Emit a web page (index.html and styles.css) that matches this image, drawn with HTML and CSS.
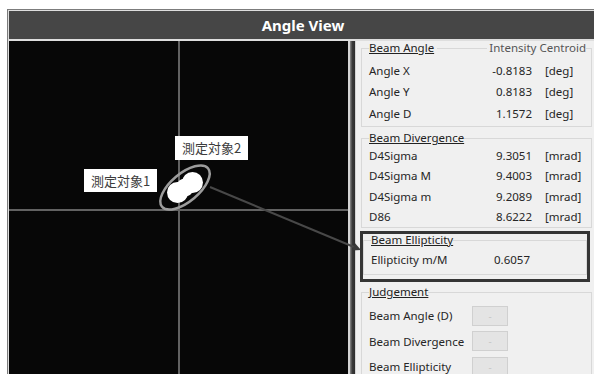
FILE: index.html
```html
<!DOCTYPE html>
<html lang="ja">
<head>
<meta charset="utf-8">
<title>Angle View</title>
<link rel="stylesheet" href="styles.css">
</head>
<body>
<div class="frame">
  <div class="title">Angle View</div>
  <div class="main">
    <div class="canvas">
      <svg class="plot" width="339" height="340" viewBox="0 0 339 340">
        <line class="axis" x1="170" y1="0" x2="170" y2="340"/>
        <line class="axis" x1="0" y1="169" x2="339" y2="169"/>
        <ellipse class="ring" cx="0" cy="0" rx="30" ry="14" transform="translate(176 146.5) rotate(-40)"/>
        <circle class="spot" cx="168.5" cy="151.5" r="10.5"/>
        <circle class="spot" cx="183.5" cy="141.5" r="10.5"/>
        <ellipse class="spot" cx="0" cy="0" rx="9" ry="9" transform="translate(176 146.5) rotate(-36)"/>
      </svg>
      <div class="tag tag-1">測定対象1</div>
      <div class="tag tag-2">測定対象2</div>
    </div>
    <div class="splitter"></div>
    <div class="panel">
      <fieldset class="group group-angle">
        <legend class="legend legend-split"><span class="legend-title">Beam Angle</span><span class="legend-rule"></span><span class="legend-note">Intensity Centroid</span></legend>
        <div class="row"><span class="label">Angle X</span><span class="value">-0.8183</span><span class="unit">[deg]</span></div>
        <div class="row"><span class="label">Angle Y</span><span class="value">0.8183</span><span class="unit">[deg]</span></div>
        <div class="row"><span class="label">Angle D</span><span class="value">1.1572</span><span class="unit">[deg]</span></div>
      </fieldset>
      <fieldset class="group group-div">
        <legend class="legend"><span class="legend-title">Beam Divergence</span></legend>
        <div class="row row-div"><span class="label">D4Sigma</span><span class="value">9.3051</span><span class="unit">[mrad]</span></div>
        <div class="row row-div"><span class="label">D4Sigma M</span><span class="value">9.4003</span><span class="unit">[mrad]</span></div>
        <div class="row row-div"><span class="label">D4Sigma m</span><span class="value">9.2089</span><span class="unit">[mrad]</span></div>
        <div class="row row-div"><span class="label">D86</span><span class="value">8.6222</span><span class="unit">[mrad]</span></div>
      </fieldset>
      <div class="highlight">
        <fieldset class="group group-ell">
          <legend class="legend legend-tight"><span class="legend-title">Beam Ellipticity</span></legend>
          <div class="row row-ell"><span class="label label-ell">Ellipticity m/M</span><span class="value">0.6057</span></div>
        </fieldset>
      </div>
      <fieldset class="group group-judge">
        <legend class="legend"><span class="legend-title">Judgement</span></legend>
        <div class="row row-judge"><span class="label label-judge">Beam Angle (D)</span><span class="judge-box">-</span></div>
        <div class="row row-judge"><span class="label label-judge">Beam Divergence</span><span class="judge-box">-</span></div>
        <div class="row row-judge"><span class="label label-judge">Beam Ellipticity</span><span class="judge-box">-</span></div>
      </fieldset>
    </div>
    <svg class="arrow" width="588" height="340" viewBox="0 0 588 340">
      <line x1="201" y1="146" x2="345" y2="206"/>
      <polygon points="352,209 343.1,209.6 346.1,202.2"/>
    </svg>
  </div>
</div>
</body>
</html>
```
FILE: styles.css
```css
html, body {
  margin: 0;
  padding: 0;
}
body {
  background: #ffffff;
  overflow: hidden;
  width: 594px;
  height: 374px;
  font-family: "Noto Sans", "Liberation Sans", sans-serif;
  color: #262626;
}
.frame {
  margin: 9px 0 0 7px;
  width: 588px;
  border-left: 1px solid #7c7c7c;
  border-top: 1px solid #7c7c7c;
  padding: 1px 0 0 1px;
  background: #dedede;
}
.title {
  height: 28px;
  background: #464646;
  color: #ffffff;
  font-weight: 700;
  font-size: 15px;
  line-height: 28px;
  text-align: center;
}
.main {
  margin-top: 2px;
  display: flex;
  height: 340px;
  position: relative;
  background: #d4d4d4;
}
.canvas {
  flex: none;
  width: 339px;
  height: 340px;
  background: #070707;
  position: relative;
}
.plot {
  display: block;
}
.axis {
  stroke: #626262;
  stroke-width: 2;
}
.ring {
  fill: none;
  stroke: #9c9c9c;
  stroke-width: 2.5;
}
.spot {
  fill: #ffffff;
}
.tag {
  position: absolute;
  width: 73px;
  height: 23px;
  background: #ffffff;
  color: #3c3c3c;
  font-family: "Noto Sans CJK JP", "Noto Sans", sans-serif;
  font-size: 13px;
  line-height: 23px;
  text-align: center;
}
.tag-1 {
  left: 75px;
  top: 128px;
}
.tag-2 {
  left: 166px;
  top: 95px;
  height: 24px;
  line-height: 24px;
}
.splitter {
  flex: none;
  width: 5px;
  margin-left: 2px;
  margin-right: 1px;
  background: linear-gradient(to right, #8a8a8a, #3a3a3a 45%, #2c2c2c);
}
.panel {
  flex: none;
  width: 241px;
  box-sizing: border-box;
  padding: 0 5px;
  background: #f0f0f0;
  font-size: 11.5px;
}
.group {
  margin: 0;
  min-width: 0;
  border: 1px solid #d8d8d8;
  padding: 4.5px 5px 2px 7px;
}
.legend {
  padding: 0;
  font-size: 11.5px;
  line-height: 14px;
  color: #222222;
}
.legend-split {
  width: 100%;
  display: flex;
  align-items: center;
}
.legend-title {
  text-decoration: underline;
}
.legend-rule {
  flex: 1;
  height: 1px;
  background: #d8d8d8;
  margin: 0 2px 0 3px;
}
.legend-note {
  color: #555555;
}
.row {
  display: flex;
  align-items: center;
  height: 21.5px;
  white-space: nowrap;
}
.label {
  width: 110px;
}
.value {
  width: 53px;
  text-align: right;
}
.unit {
  margin-left: 13px;
}
.group-div {
  margin-top: 4px;
  padding-top: 0;
  padding-bottom: 0;
}
.row-div {
  height: 20.5px;
}
.highlight {
  margin: 3px 2px 0 -1px;
  border: 3px solid #353535;
}
.group-ell {
  margin: 0 0 4px 0;
  padding: 3px 5px 5px 7px;
}
.legend-tight {
  line-height: 12px;
}
.row-ell {
  height: 20px;
}
.label-ell {
  width: 106px;
}
.group-judge {
  margin-top: 3px;
  padding-top: 4px;
}
.row-judge {
  height: 25.5px;
}
.label-judge {
  width: 103px;
}
.judge-box {
  width: 36px;
  height: 20px;
  box-sizing: border-box;
  background: #e4e4e4;
  border: 1px solid #d0d0d0;
  color: #c8c8c8;
  font-size: 10px;
  display: flex;
  align-items: center;
  justify-content: center;
}
.arrow {
  position: absolute;
  left: 0;
  top: 0;
  pointer-events: none;
  overflow: visible;
}
.arrow line {
  stroke: #484848;
  stroke-width: 2;
}
.arrow polygon {
  fill: #3a3a3a;
}
```
